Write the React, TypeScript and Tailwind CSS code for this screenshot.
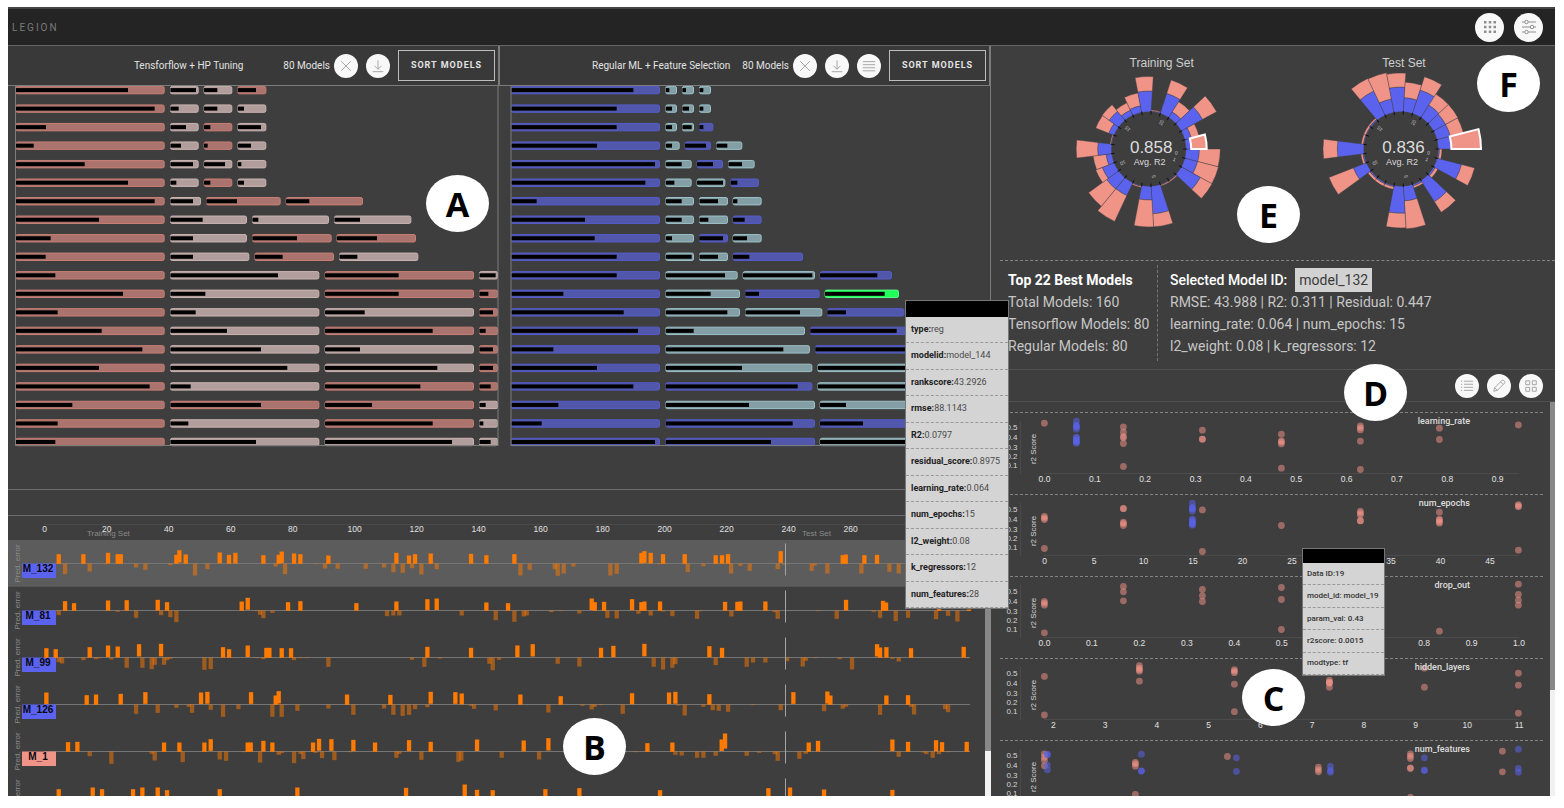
import React from "react";

type Kind = "tf" | "tfSoft" | "reg" | "regSoft" | "picked";
type Segment = [start: number, end: number, fill: number, kind: Kind];

const KIND_FILL: Record<Kind, string> = {
  tf: "#aa736d",
  tfSoft: "#b19e9c",
  reg: "#5157ab",
  regSoft: "#839ea4",
  picked: "#1eff57",
};
const KIND_EDGE: Record<Kind, string> = {
  tf: "#c97f75",
  tfSoft: "#cbb4b0",
  reg: "#555cca",
  regSoft: "#9bc2c8",
  picked: "#5cf58a",
};

const T: Kind = "tf";
const G: Kind = "tfSoft";
const B: Kind = "reg";
const C: Kind = "regSoft";

/* Bar data is stored at three units per pixel. */
const UNIT = 3;

const tfShort = (a: number, f: [number, Kind][]): Segment[] => [
  [46, 494, a, T],
  [510, 596, f[0][0], f[0][1]],
  [611, 697, f[1][0], f[1][1]],
  [712, 799, f[2][0], f[2][1]],
];
const tfLong = (a: number, f: [number, Kind][]): Segment[] => [
  [46, 494, a, T],
  [510, 958, f[0][0], f[0][1]],
  [974, 1422, f[1][0], f[1][1]],
  [1437, 1494, f[2][0], f[2][1]],
];

const TF_ROWS: Segment[][] = [
  tfShort(384, [[588, G], [652, G], [768, T]]),
  tfShort(464, [[536, G], [652, G], [732, G]]),
  tfShort(138, [[558, G], [631, T], [783, G]]),
  tfShort(101, [[543, G], [623, T], [753, G]]),
  tfShort(254, [[579, G], [675, G], [724, G]]),
  tfShort(384, [[529, G], [631, T], [732, G]]),
  [[46, 494, 464, T], [510, 603, 579, G], [618, 842, 711, T], [857, 1089, 928, T]],
  [[46, 494, 297, T], [510, 741, 608, G], [756, 987, 775, G], [1002, 1234, 1080, G]],
  [[46, 494, 152, T], [510, 741, 579, G], [756, 995, 891, T], [1009, 1248, 1131, T]],
  [[46, 494, 137, T], [510, 748, 579, G], [763, 1002, 848, T], [1017, 1255, 1072, G]],
  tfLong(166, [[834, G], [1196, T], [1487, G]]),
  tfLong(369, [[616, G], [1196, T], [1465, T]]),
  tfLong(173, [[587, G], [1094, G], [1479, T]]),
  tfLong(305, [[681, G], [1298, T], [1457, T]]),
  tfLong(427, [[783, G], [1080, G], [1479, T]]),
  tfLong(297, [[862, G], [1312, G], [1479, T]]),
  tfLong(449, [[572, G], [1261, T], [1472, T]]),
  tfLong(217, [[783, T], [1116, T], [1457, G]]),
  tfLong(173, [[565, G], [1298, T], [1450, G]]),
  tfLong(166, [[768, G], [1356, G], [1472, G]]),
];

const REG_ROWS: Segment[][] = [
  [[63, 510, 430, B], [526, 561, 538, C], [576, 612, 588, C], [627, 663, 640, C]],
  [[63, 510, 380, B], [526, 561, 546, C], [576, 612, 597, C], [627, 663, 640, C]],
  [[63, 510, 380, B], [526, 561, 546, C], [576, 612, 605, C], [627, 670, 640, B]],
  [[63, 510, 321, B], [526, 569, 546, C], [584, 663, 648, B], [678, 757, 712, C]],
  [[63, 510, 495, B], [526, 605, 575, C], [620, 699, 669, B], [714, 794, 756, C]],
  [[63, 510, 466, B], [526, 605, 553, C], [620, 706, 699, C], [721, 807, 742, B]],
  [[63, 510, 140, B], [526, 612, 575, C], [627, 714, 684, C], [728, 815, 742, C]],
  [[63, 510, 285, B], [526, 612, 575, C], [627, 714, 655, C], [728, 815, 764, B]],
  [[63, 510, 314, B], [526, 612, 546, C], [627, 714, 699, B], [728, 815, 771, C]],
  [[63, 510, 380, B], [526, 612, 605, C], [627, 714, 684, C], [728, 939, 778, B]],
  [[63, 510, 380, B], [526, 743, 705, C], [758, 975, 967, C], [989, 1206, 1162, B]],
  [[63, 510, 220, B], [526, 750, 662, C], [765, 989, 807, B], [1004, 1227, 1184, "picked"]],
  [[63, 510, 401, B], [526, 750, 712, C], [765, 997, 930, C], [1011, 1243, 1068, B]],
  [[63, 510, 444, B], [526, 945, 611, C], [960, 1400, 1220, B]],
  [[63, 510, 190, B], [526, 960, 880, C], [975, 1410, 1390, B]],
  [[63, 510, 321, B], [526, 967, 756, C], [982, 1420, 1400, C]],
  [[63, 510, 430, B], [526, 967, 923, B], [982, 1420, 1400, C]],
  [[63, 510, 205, B], [526, 975, 777, C], [989, 1430, 1068, C]],
  [[63, 510, 155, B], [526, 975, 908, B], [989, 1430, 1119, B]],
  [[63, 510, 495, B], [526, 975, 843, B], [989, 1430, 1400, C]],
];

function ModelBars({ rows, origin, left, right, width }: {
  rows: Segment[][]; origin: number; left: number; right: number; width: number;
}) {
  const px = (v: number) => v / UNIT - origin;
  return (
    <svg viewBox={`0 0 ${width} 361`} className="block h-auto w-full" role="img" aria-label="Ranked models">
      {rows.map((row, i) => {
        const cy = 4 + i * 18.52;
        return (
          <g key={i}>
            {row.map(([s, e, f, k]) => (
              <g key={s}>
                <rect x={px(s) + 0.5} y={cy - 3.6} width={(e - s) / UNIT - 1} height={7.4} rx={1.6} fill={KIND_FILL[k]} stroke={KIND_EDGE[k]} />
                <rect x={px(s) + 0.4} y={cy - 1.9} width={(f - s) / UNIT - 0.4} height={4} fill="#000" />
              </g>
            ))}
          </g>
        );
      })}
      <path d={`M${left} 0V360M${right} 0V360M${left} 359.5H${right}`} stroke="#7c7c7c" strokeWidth={1} fill="none" />
    </svg>
  );
}

/* ---------- icons ---------- */

type IconName = "close" | "download" | "menu" | "list" | "edit" | "grid" | "apps" | "sliders";

function Icon({ name, className }: { name: IconName; className: string }) {
  return (
    <svg viewBox="0 0 32 32" className={className} fill="none" stroke="currentColor" strokeWidth={2} aria-hidden="true">
      {name === "close" && <path d="M5 5L27 27M27 5L5 27" />}
      {name === "download" && <path d="M16 3V23M8 15.500L16 23.500L24 15.500M4 29H28" />}
      {name === "menu" && <path d="M2 6H30M2 13H30M2 20H30M2 27H30" />}
      {name === "list" && <path d="M9 5H30M9 12H30M9 19H30M9 26H30M2 5H5M2 12H5M2 19H5M2 26H5" />}
      {name === "edit" && <path d="M4 28L6 20L23 3Q24.500 2 26 3L29 6Q30 7.500 29 9L12 26ZM19.500 6.500L25.500 12.500M6 20L12 26" />}
      {name === "grid" && <path d="M4 4H13V13H4ZM19 4H28V13H19ZM4 19H13V28H4ZM19 19H28V28H19Z" />}
      {name === "apps" && (
        <path
          fill="currentColor"
          stroke="none"
          d="M4 4h5v5H4zM13.500 4h5v5h-5zM23 4h5v5h-5zM4 13.500h5v5H4zM13.500 13.500h5v5h-5zM23 13.500h5v5h-5zM4 23h5v5H4zM13.500 23h5v5h-5zM23 23h5v5h-5z"
        />
      )}
      {name === "sliders" && (
        <g>
          <path d="M2 6H7M15 6H30M2 16H18M26 16H30M2 26H7M15 26H30" />
          <circle cx="11" cy="6" r="3.500" />
          <circle cx="22" cy="16" r="3.500" />
          <circle cx="11" cy="26" r="3.500" />
        </g>
      )}
    </svg>
  );
}

function RoundButton({ name, label, large = false }: { name: IconName; label: string; large?: boolean }) {
  return (
    <button
      type="button"
      aria-label={label}
      className={`flex shrink-0 items-center justify-center rounded-full bg-[#f8f8f8] ${large ? "size-[29px] text-[#8e8e8e]" : "size-6 text-[#9c9c9c]"}`}
    >
      <Icon name={name} className={large ? "size-4" : "size-3.5"} />
    </button>
  );
}

function PanelHeader({ title, wideGap, menu }: { title: string; wideGap?: boolean; menu?: boolean }) {
  return (
    <div className="flex h-10 items-center justify-end gap-2 border-r-2 border-b border-[#7c7c7c] bg-[#393939] pr-[3px]">
      <div className={`flex items-center text-[10px] text-[#e2e2e2] ${wideGap ? "gap-10" : "gap-3"}`}>
        <h2>{title}</h2>
        <div className="flex items-center gap-1">
          <span>80 Models</span>
          <RoundButton name="close" label={`Clear ${title}`} />
        </div>
      </div>
      <RoundButton name="download" label={`Download ${title}`} />
      {menu && <RoundButton name="menu" label={`${title} menu`} />}
      <button type="button" className="h-[31px] w-[97px] border border-[#bdbdbd] text-[9px] font-bold tracking-[1px] text-[#e4e4e4]">
        SORT MODELS
      </button>
    </div>
  );
}

/* ---------- prediction error ---------- */

const ERROR_ROWS: { id?: string; tf?: boolean; active?: boolean; marks: [number, number][] }[] = [
  { id: "M_132", active: true, marks: [
    [176, 28], [195, -32], [250, 28], [269, -24], [316, -2], [324, 32], [353, 28], [362, 28], [408, -12], [436, -19], [511, -5], [529, 26], [538, 40], [557, 27], [585, -36], [622, -17], [659, 33], [687, 26], [706, 32], [790, 25], [827, -9], [836, 26], [845, 36], [855, -32], [882, 30], [901, 28], [947, -2], [975, -15], [985, 24], [1013, -16],
    [1097, -16], [1152, -12], [1180, -26], [1189, 32], [1208, -28], [1227, 24], [1236, -14], [1245, 28], [1264, -33], [1292, 30], [1310, -17], [1413, 29], [1459, 25], [1543, 28], [1561, -36], [1589, -19], [1664, -17], [1673, -37], [1691, -30], [1720, -9], [1831, -36], [1850, -31], [1924, 32], [1933, 37], [1952, 32], [1979, -2], [1989, 28],
    [2054, 28], [2063, -26], [2110, -8], [2147, 25], [2166, 25], [2184, 28], [2193, -30], [2221, -7], [2249, -22], [2333, -17], [2342, 37], [2352, -3], [2435, -22], [2444, -6], [2482, -30], [2528, 25], [2537, 27], [2584, -30], [2593, 25], [2631, 26], [2668, -25], [2696, -30],
  ] },
  { id: "M_81", marks: [
    [176, -14], [195, 28], [222, 22], [324, 30], [353, -4], [380, 31], [408, -22], [473, 32], [483, -14], [501, 25], [511, -20], [529, -35], [725, 27], [743, 38], [771, -2], [780, -13], [790, -23], [817, -7], [864, 25], [901, 28],
    [1069, 22], [1161, -17], [1180, -15], [1189, 27], [1198, -15], [1282, 34], [1310, 36], [1385, -15], [1459, 24], [1487, -29], [1524, 22], [1543, -34], [1571, -18], [1580, -15], [1654, -5], [1682, -2], [1738, -9], [1775, 36], [1784, 25], [1812, 26], [1822, -22], [1850, -24], [1896, 34], [1915, -10], [1924, 25], [1933, 27], [1952, -15], [1980, 27], [1989, -3],
    [2017, -17], [2091, -25], [2100, -2], [2175, 26], [2194, -18], [2212, 26], [2221, 27], [2296, 27], [2324, -5], [2333, -25], [2454, -2], [2510, -25], [2538, 32], [2621, -4], [2640, -22], [2649, 29], [2658, 24], [2687, -32], [2724, -22], [2808, -26], [2817, 4], [2844, -16], [2872, -33], [2907, 3],
  ] },
  { id: "M_99", marks: [
    [139, 28], [167, 25], [176, -14], [186, -18], [250, -8], [269, 31], [288, -5], [298, -2], [324, 36], [334, -6], [353, 33], [380, -31], [417, 40], [427, -31], [455, -35], [464, -22], [483, 41], [492, -22], [501, -8], [511, -4], [613, -37], [632, -35], [669, 31], [687, 25], [743, 36], [771, -2], [790, -5], [799, 29], [808, 29], [845, 28], [873, 28], [882, -8], [901, -2], [920, -2], [985, -28],
    [1236, -7], [1273, -28], [1282, 32], [1320, -3], [1413, 29], [1468, -19], [1478, -38], [1497, -7], [1552, 36], [1598, 40], [1673, -19], [1738, -27], [1775, -1], [1803, 29], [1840, 35], [1933, 41], [1961, -28], [1989, -36],
    [2017, -31], [2026, -20], [2128, 34], [2147, -23], [2166, 29], [2240, -28], [2259, -15], [2296, -15], [2361, -11], [2408, -27], [2417, -10], [2445, -2], [2519, -5], [2556, -36], [2631, 40], [2640, 30], [2659, 31], [2677, -4], [2696, -12], [2733, 28], [2891, 32], [2900, -2],
  ] },
  { id: "M_126", marks: [
    [139, 36], [260, 28], [288, 30], [362, 32], [408, -28], [436, 37], [473, -25], [529, -10], [566, -7], [576, -25], [603, 36], [622, 38], [632, -16], [669, -37], [715, -14], [753, 37], [817, -37], [827, 27], [836, 40], [845, -37], [892, -19], [985, -12],
    [1041, 30], [1060, -31], [1152, -12], [1171, 29], [1180, -31], [1208, -34], [1227, -31], [1245, -14], [1282, -8], [1292, 38], [1366, 37], [1385, 33], [1413, -4], [1422, -13], [1487, -18], [1561, 30], [1645, -24], [1682, 25], [1747, -4], [1775, -15], [1784, -7], [1803, -2], [1868, -28], [1896, 34],
    [2007, 36], [2026, 38], [2035, -3], [2054, -33], [2110, -7], [2128, 31], [2138, -17], [2156, -19], [2184, -22], [2259, -2], [2342, -17], [2380, 37], [2472, -20], [2482, 39], [2491, 27], [2528, -13], [2538, -7], [2640, -31], [2659, 27], [2724, 28], [2733, -7], [2742, -30], [2835, -14], [2844, -23],
  ] },
  { id: "M_1", tf: true, marks: [
    [204, 28], [232, 29], [269, -14], [334, -37], [455, -7], [464, -27], [492, 27], [538, 27], [548, -32], [613, 27], [632, 37], [659, -24], [678, -28], [734, -2], [743, 27], [752, 27], [780, -33], [790, 32], [817, 27], [836, -10], [845, -5], [882, -35], [901, -7], [910, -23], [939, 27], [947, -4], [957, 38], [966, -20], [994, 37], [1003, -26],
    [1050, -2], [1060, 35], [1125, 27], [1189, -19], [1198, -7], [1227, 34], [1264, -25], [1292, 29], [1375, -31], [1384, -27], [1431, 36], [1505, -19], [1571, 33], [1617, -24], [1645, 40], [1905, -2], [1942, 25],
    [2017, 27], [2026, -10], [2045, -12], [2091, -19], [2110, -19], [2147, -13], [2165, 36], [2175, 54], [2240, -13], [2277, -4], [2324, -8], [2333, -28], [2398, -22], [2417, -7], [2426, 27], [2454, 32], [2640, -1], [2677, 36], [2696, -16], [2724, 29], [2770, -3], [2779, -8], [2798, -19], [2808, 34], [2817, -8], [2826, 28], [2844, -2], [2900, 29],
  ] },
  { marks: [
    [176, 28], [278, 33], [306, 28], [399, 28], [427, 33], [473, 33], [501, 25], [659, 28], [892, 33], [1218, 32], [1394, 42], [1431, 26], [1478, 25], [1636, 28], [1738, 31], [1980, 25], [2305, 31], [2370, 33], [2472, 27], [2677, 26],
  ] },
];

function ErrorRow({ id, tf, active, marks }: (typeof ERROR_ROWS)[number]) {
  const base = 23.5;
  return (
    <li className={active ? "border-b border-[#545454] bg-[#5c5c5c]" : "border-b border-transparent"}>
      <svg viewBox="0 0 977 46" className="block h-auto w-full font-['Liberation_Sans',sans-serif]" overflow="visible">
        <text transform={`translate(12 ${base}) rotate(-90)`} textAnchor="middle" fontSize="8" fill="#8a8a8a">Pred. error</text>
        <path d={`M36 ${base}H962`} stroke="#757575" />
        <rect x="14" y={base} width="34" height="14.500" fill={tf ? "#f19488" : "#5b63ee"} />
        {id && <text x="30" y={base + 8.5} textAnchor="middle" fontSize="10" fontWeight="700" fill="#08080f">{id}</text>}
        {marks.map(([c, v], i) => {
          const x = c / UNIT - 10.1;
          if (v < 0) return <rect key={i} x={x} y={base} width="4.300" height={-v / UNIT} fill="#ff7a00" opacity="0.500" />;
          const lift = Math.max(0, v - 30) * 0.4;
          return <rect key={i} x={x} y={base - v / UNIT} width="4.300" height={(v - lift) / UNIT + 0.3} fill="#ff7a00" />;
        })}
        <path d={`M777.500 ${base - 20}V${base + 12}`} stroke="#a3a3a3" />
      </svg>
    </li>
  );
}

const ERROR_TICKS = [0, 20, 40, 60, 80, 100, 120, 140, 160, 180, 200, 220, 240, 260];

/* ---------- dials ---------- */

const TRAIN: [number, number][] = [
  [50.7, 71.6], [50.5, 72], [59, 72.3], [38, 39], [38, 39], [65, 78], [51, 78], [38, 39.2], [51.5, 80], [52, 74.3], [50, 57], [43, 56], [51, 72.5],
  [38, 39], [43, 57], [49, 57.5], [43, 51], [44, 57], [58, 72.5], [38, 39], [58.5, 72.5], [44, 56], [61.5, 77.5], [44, 52], [42.5, 58],
];
const TEST: [number, number][] = [
  [38.5, 41], [62.5, 76], [39, 42], [62.5, 75], [39, 41], [52, 80], [64.3, 79], [38.5, 41], [38.5, 41], [38.5, 41], [51.3, 77.5], [38.5, 40.5], [63.7, 78],
  [38, 40], [38, 40], [38.5, 40], [64, 78], [51, 77.5], [62, 76], [51.5, 67], [62, 76], [52, 65], [51, 65], [51, 64.5], [50.4, 80],
];
const STEP = 360 / 25;

function wedge(r0: number, r1: number, k: number) {
  const a = (k * STEP * Math.PI) / 180;
  const b = ((k + 1) * STEP * Math.PI) / 180;
  const p = (r: number, t: number) => `${(r * Math.cos(t)).toFixed(2)} ${(r * Math.sin(t)).toFixed(2)}`;
  return `M${p(r0, a)}L${p(r1, a)}A${r1} ${r1} 0 0 1 ${p(r1, b)}L${p(r0, b)}A${r0} ${r0} 0 0 0 ${p(r0, a)}Z`;
}

function Dial({ x, titleX, title, score, data }: { x: number; titleX: number; title: string; score: string; data: [number, number][] }) {
  const last = data.length - 1;
  return (
    <g transform={`translate(${x} 103)`}>
      {data.map(([blue, total], k) => (
        <g key={k} stroke="#3e3e3e" strokeWidth={0.4}>
          <path d={wedge(37.2, blue, k)} fill="#5b63ee" />
          <path d={wedge(blue, total, k)} fill="#f19488" />
        </g>
      ))}
      <path d={wedge(data[last][0], data[last][1], last)} fill="#f19488" stroke="#fff" strokeWidth={2} />
      {data.map((_, k) => (
        <path key={k} d="M34.500 0H38" stroke="#111" transform={`rotate(${k * STEP})`} />
      ))}
      {[0, 1, 5, 10, 15, 20].map((k) => (
        <text key={k} transform={`rotate(${(k + 0.5) * STEP}) translate(26.500 2)`} fontSize="5" fill="#c4c4c4">{k}</text>
      ))}
      <text x={titleX} y="-82" textAnchor="middle" fontSize="12" fill="#cfcfcf">{title}</text>
      <text x="2.500" y="4" textAnchor="middle" fontSize="17" fill="#dcdcdc">{score}</text>
      <text x="1" y="16" textAnchor="middle" fontSize="9" fill="#dcdcdc">Avg. R2</text>
    </g>
  );
}

/* ---------- scatter plots ---------- */

type Dots = [x: number, ys: number[]][];
type Plot = { name: string; ticks: string[]; from: number; step: number; tf: Dots; reg: Dots };

const SCATTER: Plot[] = [
  {
    name: "learning_rate", ticks: ["0.0", "0.1", "0.2", "0.3", "0.4", "0.5", "0.6", "0.7", "0.8", "0.9"], from: 1044.5, step: 50.35,
    tf: [[1044, [11]], [1123, [14.7, 20, 24.5, 25.5, 31.3, 54.3]], [1202, [18, 27, 27]], [1281, [22, 28.7, 29.7, 31.7, 56]], [1360, [13.7, 15.7, 17.7, 29, 57.3]], [1439, [16, 27.3]], [1518, [12.7]]],
    reg: [[1076, [9, 13, 14, 15, 17, 25, 26, 28, 29, 30, 31]]],
  },
  {
    name: "num_epochs", ticks: ["0", "5", "10", "15", "20", "25", "30", "35", "40", "45"], from: 1044.5, step: 49.5,
    tf: [[1044, [22.3, 23.7, 25.3, 54.3]], [1123, [14.3, 14.5, 28, 29.3, 31.3]], [1202, [15.7, 57.3]], [1281, [31.3]], [1360, [17, 19, 20.7, 26.5, 26.7]], [1439, [18, 25, 26, 27.7, 29]], [1518, [10.4, 11.7, 12.7, 56]]],
    reg: [[1192, [9, 13, 14, 15, 17, 25, 26, 28, 29, 30, 31]]],
  },
  {
    name: "drop_out", ticks: ["0.0", "0.1", "0.2", "0.3", "0.4", "0.5", "0.6", "0.7", "0.8", "0.9", "1.0"], from: 1044.5, step: 47.45,
    tf: [[1044, [25.3, 27, 29, 56.6]], [1123, [10.3, 15.6, 24.6]], [1202, [13.3, 19.6, 25.3]], [1281, [11.3, 23.3, 53.3]], [1439, [55]], [1518, [8, 18.3, 24, 29]]],
    reg: [],
  },
  {
    name: "hidden_layers", ticks: ["2", "3", "4", "5", "6", "7", "8", "9", "10", "11"], from: 1053.3, step: 51.75,
    tf: [[1044, [18.2, 56.8]], [1139, [7.5, 10, 11.5, 13, 23]], [1234, [11.5, 13, 14.5, 26, 53.5]], [1329, [22, 24, 24.5, 25, 29]], [1424, [10, 29]], [1518, [15, 27, 55]]],
    reg: [],
  },
  {
    name: "num_features", ticks: [], from: 1044.5, step: 50,
    tf: [[1044, [13.6, 17, 20, 25.6]], [1135, [22.3, 23.6, 26, 54.3]], [1227, [16.3]], [1318, [27, 29.6, 31.6]], [1410, [13.6, 16, 18.3, 27.6, 28.3, 57]], [1502, [11, 31.6]]],
    reg: [[1047, [14.3, 14.5, 24.7, 29.6]], [1141, [14, 30.6, 31]], [1236, [17.6, 31.3]], [1330, [26.3, 30.3, 32]], [1424, [17.6, 29.6, 30.6]], [1518, [9, 28.3, 32]]],
  },
];
const SCORES: [string, number][] = [["0.5", 14], ["0.4", 24], ["0.3", 33.5], ["0.2", 43], ["0.1", 52]];

function DotColumns({ dots, left, color }: { dots: Dots; left: number; color: string }) {
  return (
    <g fill={color}>
      {dots.flatMap(([x, ys]) =>
        ys.map((y, i) => <circle key={`${x}-${i}`} cx={x + 0.4 - left} cy={y - 0.8} r="3.400" fillOpacity="0.520" />),
      )}
    </g>
  );
}

function ScatterRow({ plot }: { plot: Plot }) {
  const left = 1000;
  return (
    <li className="border-t border-dashed border-[#848484]">
      <svg viewBox="0 0 543 81" className="block h-auto w-full font-['Liberation_Sans',sans-serif]">
        <path d="M20.500 8V61M44 60.500H519" stroke="#4b4b4b" fill="none" />
        {SCORES.map(([t, y]) => (
          <text key={t} x="17.500" y={y + 3} textAnchor="end" fontSize="8" fill="#d6d6d6">{t}</text>
        ))}
        <text transform="translate(36 36) rotate(-90)" textAnchor="middle" fontSize="8" fill="#d6d6d6">r2 Score</text>
        {plot.ticks.map((t, i) => (
          <text key={t} x={plot.from + i * plot.step - left} y="68.500" textAnchor="middle" fontSize="8.500" fill="#e0e0e0">{t}</text>
        ))}
        <DotColumns dots={plot.tf} left={left} color="#f19488" />
        <DotColumns dots={plot.reg} left={left} color="#5b63ee" />
        <text x="470" y="10.500" textAnchor="end" fontSize="9" fontWeight="500" fill="#dedede" className="font-[Roboto,sans-serif]">{plot.name}</text>
      </svg>
    </li>
  );
}

/* ---------- overlays ---------- */

const MODEL_TIP: [string, string][] = [
  ["type", "reg"], ["modelid", "model_144"], ["rankscore", "43.2926"], ["rmse", "88.1143"], ["R2", "0.0797"], ["residual_score", "0.8975"],
  ["learning_rate", "0.064"], ["num_epochs", "15"], ["l2_weight", "0.08"], ["k_regressors", "12"], ["num_features", "28"],
];
const DATA_TIP = ["Data ID:19", "model_id: model_19", "param_val: 0.43", "r2score: 0.0015", "modtype: tf"];

function Marker({ letter, place }: { letter: string; place: string }) {
  return (
    <div className={`absolute flex h-[57px] w-[63px] items-center justify-center rounded-[50%] bg-white font-['Open_Sans',sans-serif] text-[34px] leading-none font-bold text-black ${place}`}>
      {letter}
    </div>
  );
}

export default function App() {
  return (
    <div className="h-screen bg-white pt-[7px] pr-[9px] pb-3 pl-2 font-[Roboto,sans-serif]">
      <div className="flex h-full flex-col overflow-hidden bg-[#3e3e3e]">
        <header className="flex h-[39px] shrink-0 items-center justify-between border-t-2 border-b border-t-[#444] border-b-[#666] bg-[#242424] pr-3 pl-1">
          <h1 className="text-[10px] tracking-[2px] text-[#7b7b7b]">LEGION</h1>
          <div className="flex gap-[10px]">
            <RoundButton name="apps" label="Applications" large />
            <RoundButton name="sliders" label="Settings" large />
          </div>
        </header>

        <main className="grid min-h-0 flex-1 grid-cols-[983fr_564fr]">
          <div className="flex min-h-0 min-w-0 flex-col">
            <div className="grid grid-cols-[492fr_491fr] pb-[42px]">
              <section className="min-w-0">
                <PanelHeader title="Tensforflow + HP Tuning" wideGap />
                <ModelBars rows={TF_ROWS} origin={8} left={7.5} right={490} width={492} />
              </section>
              <section className="min-w-0">
                <PanelHeader title="Regular ML + Feature Selection" menu />
                <ModelBars rows={REG_ROWS} origin={10} left={11} right={490.5} width={491} />
              </section>
            </div>
            <div className="h-[26px] shrink-0 border-t border-[#6c6c6c]" />
            <section className="flex min-h-0 flex-1 border-t border-[#6c6c6c]">
              <div className="min-w-0 flex-1 overflow-hidden">
                <svg viewBox="0 0 977 24" className="block h-auto w-full font-['Liberation_Sans',sans-serif]">
                  <path d="M36 8.500H962" stroke="#4a4a4a" />
                  <text x="79" y="20" fontSize="8" fill="#8a8a8a">Training Set</text>
                  <text x="794" y="20" fontSize="8" fill="#8a8a8a">Test Set</text>
                  {ERROR_TICKS.map((t) => (
                    <text key={t} x={36.7 + t * 3.1} y="16" textAnchor="middle" fontSize="8.500" fill="#e0e0e0">{t}</text>
                  ))}
                </svg>
                <ul>
                  {ERROR_ROWS.map((row, i) => <ErrorRow key={i} {...row} />)}
                </ul>
              </div>
              <div className="flex w-[6px] flex-col bg-[#f1f1f1]">
                <div className="h-[84%] bg-[#888]" />
              </div>
            </section>
          </div>

          <div className="flex min-h-0 min-w-0 flex-col">
            <svg viewBox="0 0 564 214" className="block h-auto w-full shrink-0 font-['Liberation_Sans',sans-serif]" role="img" aria-label="Average R2">
              <Dial x={157.7} titleX={13} title="Training Set" score="0.858" data={TRAIN} />
              <Dial x={410} titleX={3} title="Test Set" score="0.836" data={TEST} />
            </svg>
            <section className="ml-[9px] flex h-[109px] shrink-0 border-t border-dashed border-[#848484] pt-1 text-[14px] leading-[22px] text-[#c6c6c6]">
              <div className="mb-2 w-[158px] border-r border-dashed border-[#747474] pt-1 pl-2 whitespace-nowrap">
                <h3 className="font-bold text-white">Top 22 Best Models</h3>
                <p>Total Models: 160</p>
                <p>Tensorflow Models: 80</p>
                <p>Regular Models: 80</p>
              </div>
              <div className="pt-1 pl-3 whitespace-nowrap">
                <div className="flex items-center gap-2">
                  <h3 className="font-medium text-white">Selected Model ID:</h3>
                  <span className="-my-px bg-[#d2d2d2] px-1 leading-6 text-[#3a3a3a]">model_132</span>
                </div>
                <p>RMSE: 43.988 | R2: 0.311 | Residual: 0.447</p>
                <p>learning_rate: 0.064 | num_epochs: 15</p>
                <p>l2_weight: 0.08 | k_regressors: 12</p>
              </div>
            </section>
            <div className="flex h-[33px] shrink-0 items-center justify-end gap-2 border-y border-[#505050] pr-3">
              <RoundButton name="list" label="List" />
              <RoundButton name="edit" label="Edit" />
              <RoundButton name="grid" label="Grid" />
            </div>
            <section className="flex min-h-0 flex-1">
              <ul className="min-w-0 flex-1 overflow-hidden pt-[10px] pr-[7px] pl-[9px]">
                {SCATTER.map((p) => <ScatterRow key={p.name} plot={p} />)}
              </ul>
              <div className="flex w-[5px] flex-col bg-[#f1f1f1]">
                <div className="h-[73%] bg-[#888]" />
              </div>
            </section>
          </div>
        </main>
      </div>

      <div role="tooltip" className="absolute top-[300px] left-[905px] flex h-[309px] w-[104px] flex-col border border-[#777] bg-[#d4d4d4] text-[9px] text-[#4a4a4a]">
        <div className="h-4 bg-black" />
        {MODEL_TIP.map(([k, v]) => (
          <p key={k} className="flex flex-1 items-center border-b border-dashed border-[#999] pl-[5px]">
            <b className="font-bold text-[#222]">{k}:</b>{v}
          </p>
        ))}
      </div>
      <div role="tooltip" className="absolute top-[548px] left-[1302px] flex h-32 w-[83px] flex-col border border-[#777] bg-[#d4d4d4] text-[8px] font-medium text-[#333]">
        <div className="h-[14px] bg-black" />
        {DATA_TIP.map((t) => (
          <p key={t} className="flex flex-1 items-center border-b border-dashed border-[#999] pl-1">{t}</p>
        ))}
      </div>

      <Marker letter="A" place="top-[175px] left-[426px]" />
      <Marker letter="B" place="top-[718px] left-[563px]" />
      <Marker letter="C" place="top-[669px] left-[1242px]" />
      <Marker letter="D" place="top-[364px] left-[1344px]" />
      <Marker letter="E" place="top-[186px] left-[1237px]" />
      <Marker letter="F" place="top-[55px] left-[1477px]" />
    </div>
  );
}
